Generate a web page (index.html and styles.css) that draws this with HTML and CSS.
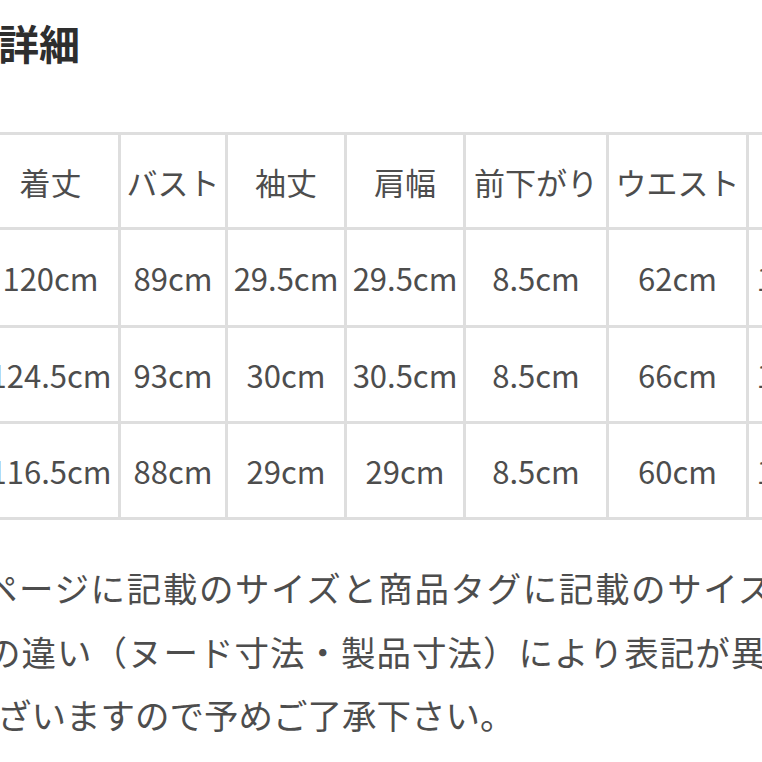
FILE: index.html
```html
<!DOCTYPE html>
<html lang="ja">
<head>
<meta charset="utf-8">
<title>サイズ詳細</title>
<link rel="stylesheet" href="styles.css">
</head>
<body>
<div class="page">
  <h2 class="title">詳細</h2>

  <div class="size-table" role="table">
    <div class="cell head c0">着丈</div>
    <div class="cell head">バスト</div>
    <div class="cell head">袖丈</div>
    <div class="cell head">肩幅</div>
    <div class="cell head">前下がり</div>
    <div class="cell head">ウエスト</div>
    <div class="cell head">裾幅</div>

    <div class="cell c0">120cm</div>
    <div class="cell">89cm</div>
    <div class="cell">29.5cm</div>
    <div class="cell">29.5cm</div>
    <div class="cell">8.5cm</div>
    <div class="cell">62cm</div>
    <div class="cell">102cm</div>

    <div class="cell c0">124.5cm</div>
    <div class="cell">93cm</div>
    <div class="cell">30cm</div>
    <div class="cell">30.5cm</div>
    <div class="cell">8.5cm</div>
    <div class="cell">66cm</div>
    <div class="cell">106cm</div>

    <div class="cell c0">116.5cm</div>
    <div class="cell">88cm</div>
    <div class="cell">29cm</div>
    <div class="cell">29cm</div>
    <div class="cell">8.5cm</div>
    <div class="cell">60cm</div>
    <div class="cell">100cm</div>
  </div>

  <p class="note">
    <span class="line l1">ページに記載のサイズと商品タグに記載のサイズ</span>
    <span class="line l2">の違い（ヌード寸法・製品寸法）により表記が異</span>
    <span class="line l3">ざいますので予めご了承下さい。</span>
  </p>
</div>
</body>
</html>
```

FILE: styles.css
```css
html, body {
  margin: 0;
  padding: 0;
  overflow: hidden;
  background: #ffffff;
}

body {
  width: 762px;
  height: 762px;
  font-family: "Noto Sans CJK JP", "Noto Sans", sans-serif;
  color: #4d4d4d;
}

.page {
  margin-left: -20px;
  width: 1000px;
}

.title {
  margin: 0;
  padding: 22px 0 0 18px;
  font-size: 41px;
  line-height: 41px;
  font-weight: 700;
  color: #2e2e2e;
}

.size-table {
  margin-top: 69px;
  display: grid;
  grid-template-columns: 138px 107px 119px 119px 143px 140px 114px;
  grid-template-rows: 95px 98px 96px 96px;
  width: max-content;
  border-top: 3px solid #dedede;
  border-left: 3px solid #dedede;
}

.cell {
  box-sizing: border-box;
  display: flex;
  align-items: center;
  justify-content: center;
  border-right: 3px solid #dedede;
  border-bottom: 3px solid #dedede;
  font-size: 31px;
  line-height: 1;
  white-space: nowrap;
  color: #4d4d4d;
}

.note {
  margin: 36px 0 0 0;
  font-size: 34.5px;
  line-height: 63.5px;
  color: #4d4d4d;
}

.line {
  display: block;
  white-space: nowrap;
}

.l1 {
  margin-left: 3px;
  letter-spacing: 1.6px;
}

.l2 {
  margin-left: 6px;
  letter-spacing: 1px;
}

.l3 {
  margin-left: 17px;
}
```
